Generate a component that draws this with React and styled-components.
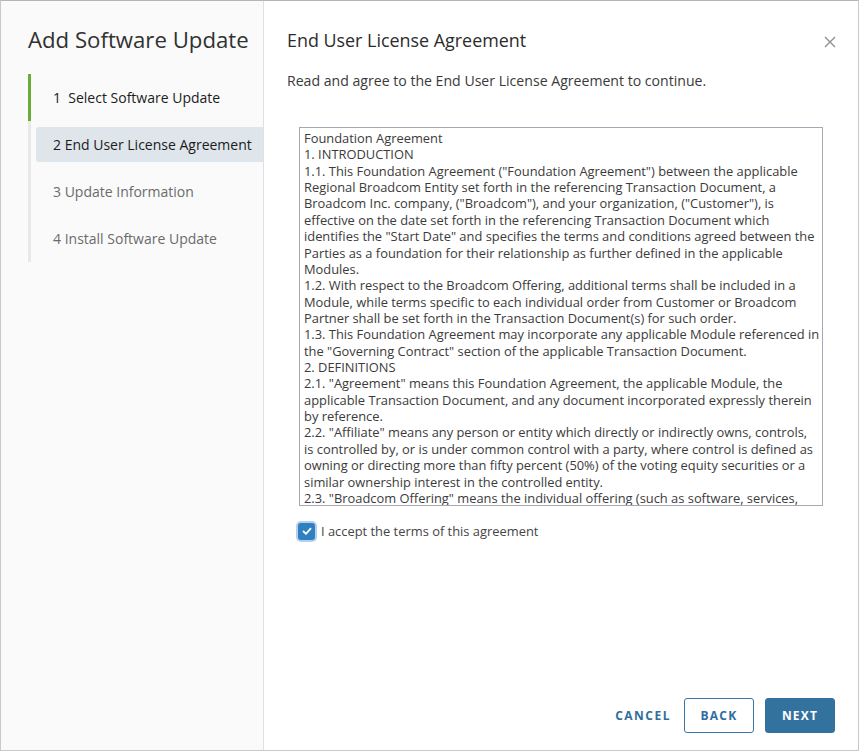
import styled, { createGlobalStyle } from "styled-components";

const GlobalStyle = createGlobalStyle`
  html, body {
    margin: 0;
    padding: 0;
    background: #ffffff;
    font-family: "Open Sans", Lato, sans-serif;
  }
  * {
    box-sizing: border-box;
  }
`;

const steps = [
  { label: "1  Select Software Update", state: "done" },
  { label: "2 End User License Agreement", state: "active" },
  { label: "3 Update Information", state: "todo" },
  { label: "4 Install Software Update", state: "todo" },
];

const eulaLines = [
  "Foundation Agreement",
  "1. INTRODUCTION",
  '1.1. This Foundation Agreement ("Foundation Agreement") between the applicable',
  "Regional Broadcom Entity set forth in the referencing Transaction Document, a",
  'Broadcom Inc. company, ("Broadcom"), and your organization, ("Customer"), is',
  "effective on the date set forth in the referencing Transaction Document which",
  'identifies the "Start Date" and specifies the terms and conditions agreed between the',
  "Parties as a foundation for their relationship as further defined in the applicable",
  "Modules.",
  "1.2. With respect to the Broadcom Offering, additional terms shall be included in a",
  "Module, while terms specific to each individual order from Customer or Broadcom",
  "Partner shall be set forth in the Transaction Document(s) for such order.",
  "1.3. This Foundation Agreement may incorporate any applicable Module referenced in",
  'the "Governing Contract" section of the applicable Transaction Document.',
  "2. DEFINITIONS",
  '2.1. "Agreement" means this Foundation Agreement, the applicable Module, the',
  "applicable Transaction Document, and any document incorporated expressly therein",
  "by reference.",
  '2.2. "Affiliate" means any person or entity which directly or indirectly owns, controls,',
  "is controlled by, or is under common control with a party, where control is defined as",
  "owning or directing more than fifty percent (50%) of the voting equity securities or a",
  "similar ownership interest in the controlled entity.",
  '2.3. "Broadcom Offering" means the individual offering (such as software, services,',
];

export default function App() {
  return (
    <>
      <GlobalStyle />
      <Dialog>
        <Sidebar>
          <WizardTitle>Add Software Update</WizardTitle>
          <StepList>
            {steps.map((s) => (
              <Step key={s.label} $state={s.state}>
                <StepLabel $state={s.state}>{s.label}</StepLabel>
              </Step>
            ))}
          </StepList>
        </Sidebar>
        <Main>
          <Header>
            <PageTitle>End User License Agreement</PageTitle>
            <CloseButton aria-label="Close">
              <svg width="12" height="12" viewBox="0 0 12 12">
                <path d="M1 1 L11 11 M11 1 L1 11" stroke="#8c8c8c" strokeWidth="1.3" />
              </svg>
            </CloseButton>
          </Header>
          <Intro>Read and agree to the End User License Agreement to continue.</Intro>
          <EulaBox>
            {eulaLines.map((line, i) => (
              <EulaLine key={i}>{line}</EulaLine>
            ))}
          </EulaBox>
          <AcceptRow>
            <Checkbox>
              <svg width="10" height="8" viewBox="0 0 10 8">
                <path d="M1 4 L4 6.8 L9 1.2" stroke="#ffffff" strokeWidth="1.8" fill="none" />
              </svg>
            </Checkbox>
            <AcceptLabel>I accept the terms of this agreement</AcceptLabel>
          </AcceptRow>
          <Footer>
            <LinkButton>CANCEL</LinkButton>
            <OutlineButton>BACK</OutlineButton>
            <PrimaryButton>NEXT</PrimaryButton>
          </Footer>
        </Main>
      </Dialog>
    </>
  );
}

const Dialog = styled.div`
  width: 859px;
  height: 751px;
  display: flex;
  border: 1px solid #c9c9c9;
  border-top-color: #b5b5b5;
  background: #ffffff;
`;

const Sidebar = styled.div`
  width: 263px;
  flex-shrink: 0;
  background: #fafafa;
  border-right: 1px solid #e3dde6;
  padding: 24px 0 0 27px;
`;

const WizardTitle = styled.h1`
  margin: 0 0 20px 0;
  font-size: 22.2px;
  font-weight: 400;
  color: #313131;
  line-height: 29px;
  white-space: nowrap;
`;

const StepList = styled.div`
  border-left: 3px solid #e8e8e8;
  display: flex;
  flex-direction: column;
`;

const Step = styled.div`
  height: 47px;
  display: flex;
  align-items: center;
  margin-left: -3px;
  border-left: 3px solid ${(p) => (p.$state === "done" ? "#6aab3a" : "transparent")};
`;

const StepLabel = styled.div`
  flex: 1;
  height: 35px;
  margin-left: 5px;
  padding-left: 17px;
  display: flex;
  align-items: center;
  font-size: 14px;
  white-space: pre;
  border-radius: 3px 0 0 3px;
  background: ${(p) => (p.$state === "active" ? "#dee5eb" : "transparent")};
  color: ${(p) => (p.$state === "todo" ? "#6b6b6b" : "#1c1c1c")};
`;

const Main = styled.div`
  flex: 1;
  display: flex;
  flex-direction: column;
  padding: 27px 23px 17px 23px;
`;

const Header = styled.div`
  display: flex;
  align-items: center;
  justify-content: space-between;
  height: 24px;
`;

const PageTitle = styled.h2`
  margin: 0;
  font-size: 17.9px;
  font-weight: 400;
  color: #2b2b2b;
`;

const CloseButton = styled.button`
  border: none;
  background: none;
  padding: 0;
  margin-top: 4px;
  margin-right: -1px;
  display: flex;
  cursor: pointer;
`;

const Intro = styled.p`
  margin: 19px 0 0 0;
  font-size: 14.1px;
  color: #3a3a3a;
  line-height: 20px;
`;

const EulaBox = styled.div`
  margin: 36px 0 0 12px;
  width: 524px;
  height: 379px;
  border: 1px solid #aaa6b3;
  padding: 2px 4px;
  overflow: hidden;
  font-size: 12.88px;
  line-height: 16.36px;
  color: #3b3b3b;
`;

const EulaLine = styled.div`
  white-space: nowrap;
`;

const AcceptRow = styled.label`
  display: flex;
  align-items: center;
  gap: 6px;
  margin: 16px 0 0 11px;
`;

const Checkbox = styled.span`
  width: 17px;
  height: 17px;
  border-radius: 3px;
  background: #2f7fc1;
  display: flex;
  align-items: center;
  justify-content: center;
  box-shadow: 0 0 0 2px rgba(120, 170, 220, 0.55);
`;

const AcceptLabel = styled.span`
  font-size: 12.9px;
  color: #454545;
`;

const Footer = styled.div`
  margin-top: auto;
  display: flex;
  justify-content: flex-end;
  align-items: center;
  gap: 11px;
`;

const BaseButton = styled.button`
  height: 35px;
  font-family: "Open Sans", Lato, sans-serif;
  font-size: 12px;
  font-weight: 700;
  letter-spacing: 1.2px;
  border-radius: 3px;
  cursor: pointer;
`;

const LinkButton = styled(BaseButton)`
  border: none;
  background: none;
  color: #2f6ea0;
  padding: 0 2px 0 0;
  letter-spacing: 1.5px;
`;

const OutlineButton = styled(BaseButton)`
  width: 70px;
  border: 1px solid #3a76a8;
  background: #ffffff;
  color: #2f6ea0;
`;

const PrimaryButton = styled(BaseButton)`
  width: 70px;
  border: 1px solid #33729f;
  background: #33729f;
  color: #ffffff;
`;
